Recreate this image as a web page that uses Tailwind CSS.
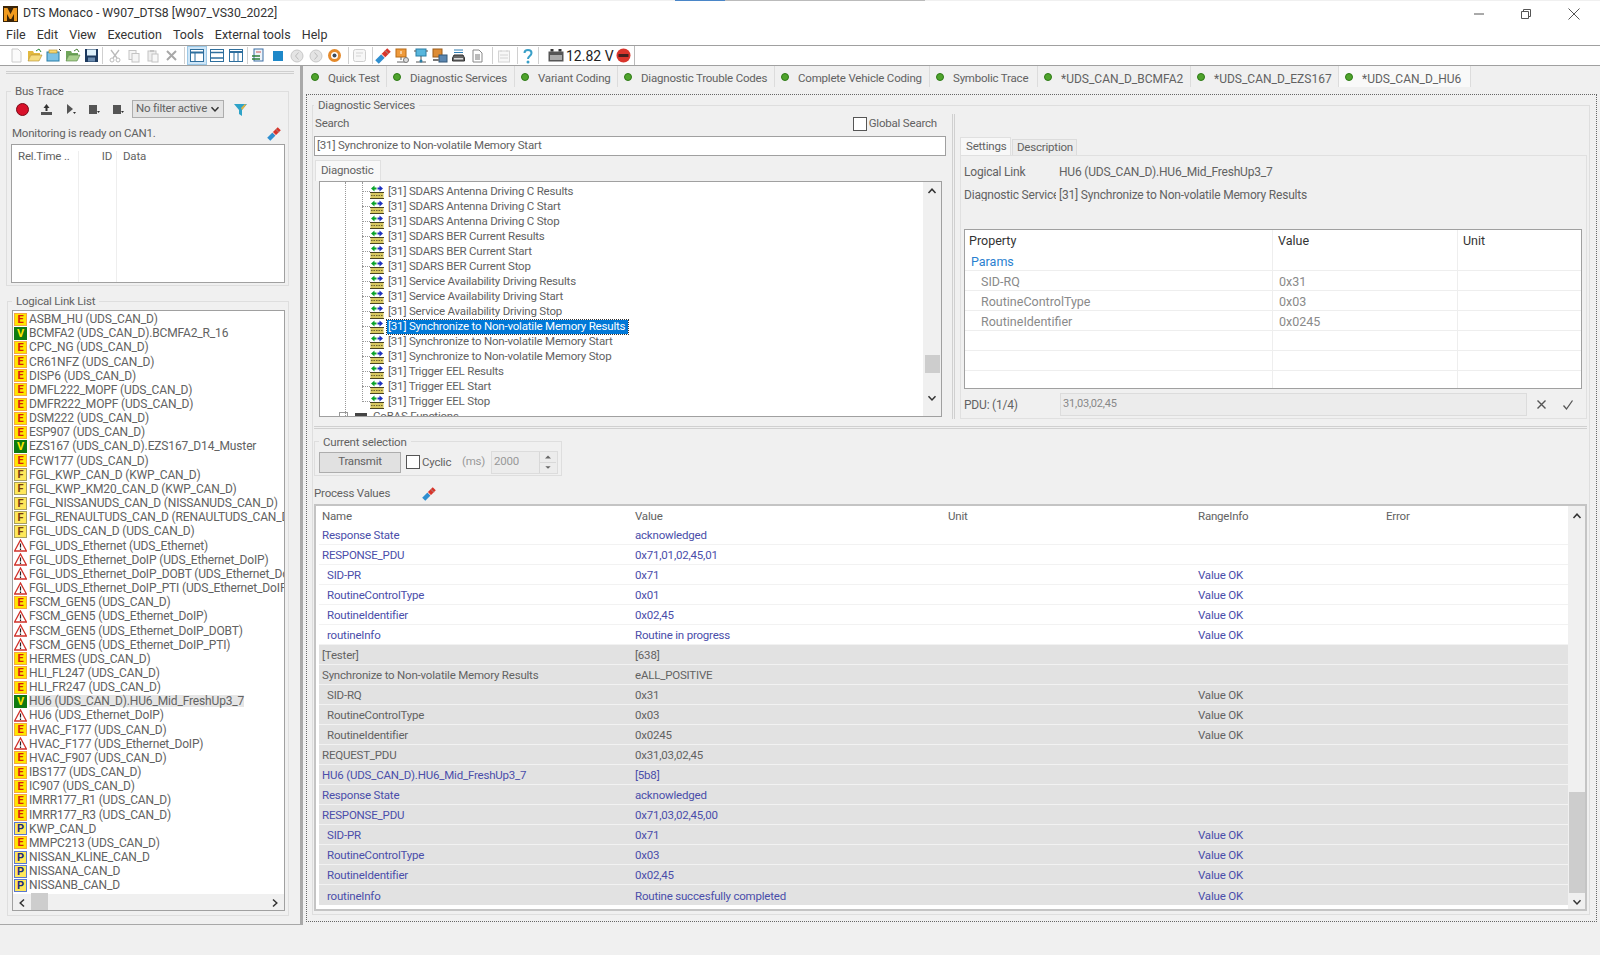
<!DOCTYPE html>
<html>
<head>
<meta charset="utf-8">
<title>DTS Monaco</title>
<script src="https://cdn.jsdelivr.net/npm/@tailwindcss/browser@4"></script>
</head>
<body class="bg-[#f0f0f0] text-[#626262] text-[11.500px] tracking-[-0.2px] leading-none whitespace-nowrap overflow-hidden font-['Roboto',sans-serif]">
<svg class="hidden">
  <symbol id="svc" viewBox="0 0 14 14"><path d="M1 3.500 4.500 .5v2h2v2h-2v2z" fill="#0aa32a"/><path d="M13 3.500 9.500 .5v2h-2v2h2v2z" fill="#1b2fc0"/><rect x="0.500" y="7.500" width="13" height="6" fill="#d8c860"/><path d="M0 7.500h14M0 13.500h14" stroke="#4a4320"/><path d="M1 10.500h12" stroke="#6b6230" stroke-dasharray="1.500 1"/></symbol>
  <symbol id="warn" viewBox="0 0 13 13"><path d="M6.500 1 12.400 12H.6z" fill="#fff" stroke="#d0322a" stroke-width="1.300"/><path d="M6.500 4.500v4M6.500 9.500v1.400" stroke="#222" stroke-width="1.200"/></symbol>
  <symbol id="up" viewBox="0 0 10 10"><path d="M1.500 7 5 3.200 8.500 7" fill="none" stroke="#333" stroke-width="1.500"/></symbol>
  <symbol id="down" viewBox="0 0 10 10"><path d="M1.500 3.200 5 7l3.500-3.800" fill="none" stroke="#333" stroke-width="1.500"/></symbol>
  <symbol id="plug" viewBox="0 0 16 16"><path d="M2 14 8 8" stroke="#2f8fd0" stroke-width="5"/><path d="M8 8l6-6" stroke="#d8352a" stroke-width="5"/><path d="M6 5.500l5 5" stroke="#fff"/><path d="M10 2.500l3.500 3.500" stroke="#999"/></symbol>
</svg>

<div class="h-[1px] relative"><div class="absolute left-[675px] top-0 w-[50px] h-[1px] bg-[#4a86c8]"></div><div class="absolute left-[725px] top-0 w-[200px] h-[1px] bg-[#bbb]"></div></div>
<header class="bg-white h-[25px] flex items-center justify-between tracking-normal">
  <div class="flex items-center">
    <svg class="ml-[3px] w-[15px] h-[16px]" viewBox="0 0 15 16"><rect width="15" height="16" fill="#3a2408"/><path d="M1 15V2h3.500l3 6 3-6H14v13h-3V8l-2.700 5H6.700L4 8v7z" fill="#f09a1e"/></svg>
    <span class="ml-[5px] text-[12.250px] text-[#333]">DTS Monaco - W907_DTS8 [W907_VS30_2022]</span>
  </div>
  <div class="flex items-center mr-[19px] gap-[35px]">
    <svg class="w-[12px] h-[12px]" viewBox="0 0 12 12"><path d="M1 6h10" stroke="#555"/></svg>
    <svg class="w-[12px] h-[12px]" viewBox="0 0 12 12"><path d="M1.500 3.500h7v7h-7zM3.500 3.500v-2h7v7h-2" fill="none" stroke="#555"/></svg>
    <svg class="w-[14px] h-[14px]" viewBox="0 0 14 14"><path d="M1.500 1.500l11 11M12.500 1.500l-11 11" stroke="#555"/></svg>
  </div>
</header>
<nav class="bg-white h-[19px] flex items-center pl-[6px] gap-[11.200px] text-[12.500px] tracking-normal text-[#333]">
  <span>File</span><span>Edit</span><span>View</span><span>Execution</span><span>Tools</span><span>External tools</span><span>Help</span>
</nav>
<div class="h-[21px] bg-white border-y border-[#a0a0a0] flex items-center pl-[6px]">
  <span class="w-[19px] flex justify-center"><svg class="w-[14px] h-[15px]" viewBox="0 0 14 15"><path d="M3 1h6l3 3v10H3z" fill="#fbfbfb" stroke="#ccc"/></svg></span>
  <span class="w-[19px] flex justify-center"><svg class="w-[16px] h-[15px]" viewBox="0 0 16 15"><path d="M1 3h5l1 2h6v2H4l-3 6z" fill="#e2b93f"/><path d="M4 7h11l-3 6H1z" fill="#f5dc80" stroke="#b18a25" stroke-width=".6"/><path d="M9 3l3-2 2 3" fill="none" stroke="#2d8a3a"/></svg></span>
  <span class="w-[19px] flex justify-center"><svg class="w-[16px] h-[15px]" viewBox="0 0 16 15"><rect x="1" y="4" width="12" height="9" fill="#7cc2e6" stroke="#2b7ea8"/><rect x="3" y="2" width="8" height="3" fill="#f6d774" stroke="#b18a25" stroke-width=".6"/><path d="M13 1l2 2" stroke="#333"/></svg></span>
  <span class="w-[19px] flex justify-center"><svg class="w-[16px] h-[15px]" viewBox="0 0 16 15"><path d="M1 3h5l1 2h6v2H4l-3 6z" fill="#6fa55a"/><path d="M4 7h11l-3 6H1z" fill="#a9d08e" stroke="#4f7f3c" stroke-width=".6"/><path d="M9 3l3-2 2 3" fill="none" stroke="#4f7f3c"/></svg></span>
  <span class="w-[19px] flex justify-center"><svg class="w-[15px] h-[15px]" viewBox="0 0 15 15"><rect x="1" y="1" width="13" height="13" fill="#1d3a5f"/><rect x="3" y="1.500" width="9" height="6" fill="#dff1fb"/><rect x="4" y="9.500" width="7" height="4" fill="#6d8db0"/></svg></span>
  <span class="ml-[1px] w-[1px] h-[17px] bg-[#d0d0d0]"></span>
  <span class="ml-[2px] w-[19px] flex justify-center"><svg class="w-[14px] h-[14px]" viewBox="0 0 14 14"><path d="M3 1l6 8M11 1 5 9" stroke="#bbb" stroke-width="1.300"/><circle cx="4" cy="11" r="2" fill="none" stroke="#bbb"/><circle cx="10" cy="11" r="2" fill="none" stroke="#bbb"/></svg></span>
  <span class="w-[19px] flex justify-center"><svg class="w-[14px] h-[14px]" viewBox="0 0 14 14"><rect x="2" y="1.500" width="7" height="9" fill="#f5f5f5" stroke="#c4c4c4"/><rect x="5" y="4.500" width="7" height="8.500" fill="#f5f5f5" stroke="#c4c4c4"/></svg></span>
  <span class="w-[19px] flex justify-center"><svg class="w-[14px] h-[14px]" viewBox="0 0 14 14"><rect x="2" y="2" width="8" height="10" fill="#eee" stroke="#c4c4c4"/><rect x="6" y="5" width="6" height="8" fill="#f8f8f8" stroke="#c4c4c4"/><rect x="4" y="1" width="4" height="2" fill="#c4c4c4"/></svg></span>
  <span class="w-[19px] flex justify-center"><svg class="w-[13px] h-[13px]" viewBox="0 0 13 13"><path d="M2 2l9 9M11 2l-9 9" stroke="#a8a8a8" stroke-width="2"/></svg></span>
  <span class="ml-[3px] w-[1px] h-[17px] bg-[#d0d0d0]"></span>
  <span class="ml-[2px] w-[20px] h-[19px] bg-[#cfe6f7] border border-[#9cc8e6] flex items-center justify-center"><svg class="w-[14px] h-[13px]" viewBox="0 0 14 13"><rect x=".5" y=".5" width="13" height="12" fill="#fff" stroke="#2e6f9e"/><path d="M.5 3.500h13" stroke="#2e6f9e" stroke-width="2"/><path d="M5 4v8" stroke="#2e6f9e"/></svg></span>
  <span class="w-[19px] flex justify-center"><svg class="w-[14px] h-[13px]" viewBox="0 0 14 13"><rect x=".5" y=".5" width="13" height="12" fill="#fff" stroke="#2e6f9e"/><path d="M.5 3.500h13M.5 9h13" stroke="#2e6f9e" stroke-width="1.500"/></svg></span>
  <span class="w-[19px] flex justify-center"><svg class="w-[14px] h-[13px]" viewBox="0 0 14 13"><rect x=".5" y=".5" width="13" height="12" fill="#fff" stroke="#2e6f9e"/><path d="M.5 3h13" stroke="#2e6f9e" stroke-width="2"/><path d="M5 3v9M9 3v9" stroke="#2e6f9e"/></svg></span>
  <span class="ml-[2px] w-[1px] h-[17px] bg-[#d0d0d0]"></span>
  <span class="ml-[1px] w-[19px] flex justify-center"><svg class="w-[15px] h-[15px]" viewBox="0 0 15 15"><rect x="3" y="1" width="9" height="12" fill="#eef4fa" stroke="#3a6ea5"/><path d="M1 8h8M1 11h8" stroke="#2f7f3a" stroke-width="1.500"/><path d="M5 4h5" stroke="#c55"/></svg></span>
  <span class="w-[19px] flex justify-center"><svg class="w-[10px] h-[10px]" viewBox="0 0 10 10"><rect width="10" height="10" fill="#1e88c9"/></svg></span>
  <span class="w-[19px] flex justify-center"><svg class="w-[14px] h-[14px]" viewBox="0 0 14 14"><circle cx="7" cy="7" r="6" fill="#e4e4e4" stroke="#c8c8c8"/><path d="M8.500 3.500 5.500 7l3 3.500" fill="none" stroke="#bbb"/></svg></span>
  <span class="w-[19px] flex justify-center"><svg class="w-[14px] h-[14px]" viewBox="0 0 14 14"><circle cx="7" cy="7" r="6" fill="#e4e4e4" stroke="#c8c8c8"/><path d="M5.500 3.500 8.500 7l-3 3.500" fill="none" stroke="#bbb"/></svg></span>
  <span class="w-[19px] flex justify-center"><svg class="w-[15px] h-[15px]" viewBox="0 0 15 15"><circle cx="7.500" cy="7.500" r="6.500" fill="#e58a2b"/><circle cx="7.500" cy="7.500" r="3.500" fill="#fff"/><circle cx="7.500" cy="7.500" r="2" fill="#3d4a5c"/></svg></span>
  <span class="ml-[4px] w-[1px] h-[17px] bg-[#d0d0d0]"></span>
  <span class="w-[20px] flex justify-center"><svg class="w-[15px] h-[15px]" viewBox="0 0 15 15"><rect x="1.500" y="1.500" width="12" height="12" rx="2" fill="#f7f7f7" stroke="#cfcfcf"/><path d="M4 5h7M4 8h5" stroke="#d5d5d5"/></svg></span>
  <span class="ml-[3px] w-[1px] h-[17px] bg-[#d0d0d0]"></span>
  <span class="w-[19px] flex justify-center"><svg class="w-[16px] h-[16px]"><use href="#plug"/></svg></span>
  <span class="w-[19px] flex justify-center"><svg class="w-[16px] h-[16px]" viewBox="0 0 16 16"><rect x="2" y="1" width="10" height="8" fill="#ee9a3c" stroke="#b96a15"/><path d="M7 3v3" stroke="#fff"/><path d="M7 9v3M3 14h8" stroke="#666"/><circle cx="12" cy="12" r="2.500" fill="#ddd" stroke="#777"/></svg></span>
  <span class="w-[19px] flex justify-center"><svg class="w-[16px] h-[16px]" viewBox="0 0 16 16"><rect x="3" y="1" width="10" height="7" fill="#58b6dc" stroke="#2a7ea5"/><path d="M1 3h2M13 3h2M8 8v4M3 14h10" stroke="#555"/><circle cx="8" cy="13" r="1.500" fill="#2a7ea5"/></svg></span>
  <span class="w-[19px] flex justify-center"><svg class="w-[16px] h-[16px]" viewBox="0 0 16 16"><rect x="1" y="1" width="9" height="8" fill="#dd8c34" stroke="#9d5d18"/><rect x="7" y="7" width="8" height="7" fill="#5a86b0" stroke="#345878"/><path d="M1 12h6" stroke="#777" stroke-width="2"/></svg></span>
  <span class="w-[19px] flex justify-center"><svg class="w-[15px] h-[15px]" viewBox="0 0 15 15"><path d="M3 2h9M3 4.500h9" stroke="#2f7fb5"/><path d="M3 7h9l1.500 3v3h-12v-3z" fill="#666" stroke="#333"/><rect x="3" y="10" width="9" height="1.500" fill="#ddd"/></svg></span>
  <span class="w-[19px] flex justify-center"><svg class="w-[13px] h-[14px]" viewBox="0 0 13 14"><path d="M2 1h6l3 3v9H2z" fill="#fff" stroke="#888"/><path d="M4 6h5M4 8h5M4 10h5" stroke="#777"/></svg></span>
  <span class="ml-[5px] w-[1px] h-[17px] bg-[#d0d0d0]"></span>
  <span class="ml-[1px] w-[19px] flex justify-center"><svg class="w-[14px] h-[14px]" viewBox="0 0 14 14"><rect x="1.500" y="2" width="11" height="11" fill="#f7f7f7" stroke="#d4d4d4"/><path d="M4 1v2M10 1v2M3 6h8M3 9h8" stroke="#d4d4d4"/></svg></span>
  <span class="ml-[4px] w-[1px] h-[17px] bg-[#d0d0d0]"></span>
  <span class="w-[19px] flex justify-center"><svg class="w-[10px] h-[16px]" viewBox="0 0 10 16"><path d="M1.500 5C1.500 1 8.500 1 8.500 5c0 3-3.500 3-3.500 6" fill="none" stroke="#3aa0c8" stroke-width="2"/><circle cx="5" cy="14" r="1.500" fill="#3aa0c8"/></svg></span>
  <span class="ml-[1px] w-[1px] h-[17px] bg-[#d0d0d0]"></span>
  <svg class="ml-[9px] w-[16px] h-[13px]" viewBox="0 0 16 13"><rect x=".5" y="2.500" width="15" height="10" fill="#555"/><rect x="2" y="6" width="12" height="5" fill="#aaa"/><rect x="2.500" y="0" width="3" height="2.500" fill="#333"/><rect x="10.500" y="0" width="3" height="2.500" fill="#333"/></svg>
  <span class="ml-[2px] w-[50px] text-[14px] tracking-normal text-[#222]">12.82 V</span>
  <svg class="w-[15px] h-[15px]" viewBox="0 0 15 15"><circle cx="7.500" cy="7.500" r="7" fill="#d9352c"/><rect x="2.500" y="6" width="10" height="3" fill="#40201e"/></svg>
  <span class="ml-[3px] w-[1px] h-[19px] bg-[#bbb]"></span>
</div>

<div class="flex h-[859px]">
  <aside class="w-[303px] shrink-0 border-r-[3px] border-b border-[#a8a8a8] pl-[6px]">
    <div class="h-[3px] w-[288px] mt-[5px] border-y border-[#cfcfcf]"></div>
    <section class="relative mt-[17px] w-[283px] h-[195px] border border-[#dedede] pl-[4px]">
      <span class="absolute left-[4px] -top-[6px] bg-[#f0f0f0] px-[4px]">Bus Trace</span>
      <div class="flex items-center h-[20px] mt-[7px] pl-[5px]">
        <svg class="w-[13px] h-[13px] mr-[11px]" viewBox="0 0 13 13"><circle cx="6.500" cy="6.500" r="6" fill="#d8112a" stroke="#7a0a18"/></svg>
        <svg class="w-[13px] h-[13px] mr-[11px]" viewBox="0 0 13 13"><path d="M6.500 1 3.500 5h2v3h2V5h2z" fill="#333"/><rect x="1" y="9" width="11" height="3" fill="#555"/></svg>
        <svg class="w-[13px] h-[13px] mr-[11px]" viewBox="0 0 13 13"><path d="M3 1v10l6-5z" fill="#555"/><path d="M9 9h3l-1.500 2z" fill="#333"/></svg>
        <svg class="w-[13px] h-[13px] mr-[11px]" viewBox="0 0 13 13"><rect x="1" y="2" width="8" height="9" fill="#555"/><path d="M9 8h3l-1.500 2z" fill="#333"/></svg>
        <svg class="w-[13px] h-[13px] mr-[7px]" viewBox="0 0 13 13"><rect x="1" y="2" width="8" height="9" fill="#555"/><path d="M9 8h3l-1.500 2z" fill="#333"/></svg>
        <div class="w-[92px] h-[18px] bg-[#e4e4e4] border border-[#adadad] flex items-center justify-between px-[3px]">No filter active <svg class="w-[10px] h-[10px]"><use href="#down"/></svg></div>
        <svg class="ml-[9px] w-[15px] h-[15px]" viewBox="0 0 15 15"><path d="M1 2h13L9 8v6L6 12V8z" fill="#2ea3c8"/><path d="M8 6l4-4 1 1-4 5z" fill="#e9b23a"/></svg>
      </div>
      <div class="flex justify-between items-center h-[14px] mt-[8px] pl-[1px] pr-[7px]">
        <span>Monitoring is ready on CAN1.</span><svg class="w-[14px] h-[14px]"><use href="#plug"/></svg>
      </div>
      <div class="w-[274px] h-[139px] mt-[3px] bg-white border border-[#a0a0a0] pt-[6px] flex">
        <span class="w-[66px] pl-[6px]">Rel.Time ..</span><span class="w-[34px] text-right border-l border-[#eee]">ID</span><span class="pl-[6px] ml-[4px] border-l border-[#eee]">Data</span>
      </div>
    </section>
    <section class="relative mt-[15px] ml-[1px] w-[282px] h-[615px] border border-[#dedede] pl-[4px] pt-[8px]">
      <span class="absolute left-[4px] -top-[6px] bg-[#f0f0f0] px-[4px]">Logical Link List</span>
      <div class="w-[273px] h-[601px] bg-white border border-[#a0a0a0] overflow-hidden text-[12px] tracking-[-0.150px]">
        <div class="h-[583px] pt-[1px] overflow-hidden">
          <div class="h-[14.170px] flex items-center"><span class="w-[13px] h-[13px] ml-[1px] mr-[2px] shrink-0 bg-[#ffe600] border border-[#f5a742] text-[#d8200c] font-bold text-[11px] flex items-center justify-center">E</span>ASBM_HU (UDS_CAN_D)</div>
          <div class="h-[14.170px] flex items-center"><span class="w-[13px] h-[13px] ml-[1px] mr-[2px] shrink-0 bg-[#0f7a12] text-[#ffe600] font-bold text-[11px] flex items-center justify-center">V</span>BCMFA2 (UDS_CAN_D).BCMFA2_R_16</div>
          <div class="h-[14.170px] flex items-center"><span class="w-[13px] h-[13px] ml-[1px] mr-[2px] shrink-0 bg-[#ffe600] border border-[#f5a742] text-[#d8200c] font-bold text-[11px] flex items-center justify-center">E</span>CPC_NG (UDS_CAN_D)</div>
          <div class="h-[14.170px] flex items-center"><span class="w-[13px] h-[13px] ml-[1px] mr-[2px] shrink-0 bg-[#ffe600] border border-[#f5a742] text-[#d8200c] font-bold text-[11px] flex items-center justify-center">E</span>CR61NFZ (UDS_CAN_D)</div>
          <div class="h-[14.170px] flex items-center"><span class="w-[13px] h-[13px] ml-[1px] mr-[2px] shrink-0 bg-[#ffe600] border border-[#f5a742] text-[#d8200c] font-bold text-[11px] flex items-center justify-center">E</span>DISP6 (UDS_CAN_D)</div>
          <div class="h-[14.170px] flex items-center"><span class="w-[13px] h-[13px] ml-[1px] mr-[2px] shrink-0 bg-[#ffe600] border border-[#f5a742] text-[#d8200c] font-bold text-[11px] flex items-center justify-center">E</span>DMFL222_MOPF (UDS_CAN_D)</div>
          <div class="h-[14.170px] flex items-center"><span class="w-[13px] h-[13px] ml-[1px] mr-[2px] shrink-0 bg-[#ffe600] border border-[#f5a742] text-[#d8200c] font-bold text-[11px] flex items-center justify-center">E</span>DMFR222_MOPF (UDS_CAN_D)</div>
          <div class="h-[14.170px] flex items-center"><span class="w-[13px] h-[13px] ml-[1px] mr-[2px] shrink-0 bg-[#ffe600] border border-[#f5a742] text-[#d8200c] font-bold text-[11px] flex items-center justify-center">E</span>DSM222 (UDS_CAN_D)</div>
          <div class="h-[14.170px] flex items-center"><span class="w-[13px] h-[13px] ml-[1px] mr-[2px] shrink-0 bg-[#ffe600] border border-[#f5a742] text-[#d8200c] font-bold text-[11px] flex items-center justify-center">E</span>ESP907 (UDS_CAN_D)</div>
          <div class="h-[14.170px] flex items-center"><span class="w-[13px] h-[13px] ml-[1px] mr-[2px] shrink-0 bg-[#0f7a12] text-[#ffe600] font-bold text-[11px] flex items-center justify-center">V</span>EZS167 (UDS_CAN_D).EZS167_D14_Muster</div>
          <div class="h-[14.170px] flex items-center"><span class="w-[13px] h-[13px] ml-[1px] mr-[2px] shrink-0 bg-[#ffe600] border border-[#f5a742] text-[#d8200c] font-bold text-[11px] flex items-center justify-center">E</span>FCW177 (UDS_CAN_D)</div>
          <div class="h-[14.170px] flex items-center"><span class="w-[13px] h-[13px] ml-[1px] mr-[2px] shrink-0 bg-[#ffe85a] border border-[#a8a060] text-[#7a3c10] font-bold text-[11px] flex items-center justify-center">F</span>FGL_KWP_CAN_D (KWP_CAN_D)</div>
          <div class="h-[14.170px] flex items-center"><span class="w-[13px] h-[13px] ml-[1px] mr-[2px] shrink-0 bg-[#ffe85a] border border-[#a8a060] text-[#7a3c10] font-bold text-[11px] flex items-center justify-center">F</span>FGL_KWP_KM20_CAN_D (KWP_CAN_D)</div>
          <div class="h-[14.170px] flex items-center"><span class="w-[13px] h-[13px] ml-[1px] mr-[2px] shrink-0 bg-[#ffe85a] border border-[#a8a060] text-[#7a3c10] font-bold text-[11px] flex items-center justify-center">F</span>FGL_NISSANUDS_CAN_D (NISSANUDS_CAN_D)</div>
          <div class="h-[14.170px] flex items-center"><span class="w-[13px] h-[13px] ml-[1px] mr-[2px] shrink-0 bg-[#ffe85a] border border-[#a8a060] text-[#7a3c10] font-bold text-[11px] flex items-center justify-center">F</span>FGL_RENAULTUDS_CAN_D (RENAULTUDS_CAN_D)</div>
          <div class="h-[14.170px] flex items-center"><span class="w-[13px] h-[13px] ml-[1px] mr-[2px] shrink-0 bg-[#ffe85a] border border-[#a8a060] text-[#7a3c10] font-bold text-[11px] flex items-center justify-center">F</span>FGL_UDS_CAN_D (UDS_CAN_D)</div>
          <div class="h-[14.170px] flex items-center"><svg class="w-[13px] h-[13px] ml-[1px] mr-[2px] shrink-0"><use href="#warn"/></svg>FGL_UDS_Ethernet (UDS_Ethernet)</div>
          <div class="h-[14.170px] flex items-center"><svg class="w-[13px] h-[13px] ml-[1px] mr-[2px] shrink-0"><use href="#warn"/></svg>FGL_UDS_Ethernet_DoIP (UDS_Ethernet_DoIP)</div>
          <div class="h-[14.170px] flex items-center"><svg class="w-[13px] h-[13px] ml-[1px] mr-[2px] shrink-0"><use href="#warn"/></svg>FGL_UDS_Ethernet_DoIP_DOBT (UDS_Ethernet_DoIP_DOBT)</div>
          <div class="h-[14.170px] flex items-center"><svg class="w-[13px] h-[13px] ml-[1px] mr-[2px] shrink-0"><use href="#warn"/></svg>FGL_UDS_Ethernet_DoIP_PTI (UDS_Ethernet_DoIP_PTI)</div>
          <div class="h-[14.170px] flex items-center"><span class="w-[13px] h-[13px] ml-[1px] mr-[2px] shrink-0 bg-[#ffe600] border border-[#f5a742] text-[#d8200c] font-bold text-[11px] flex items-center justify-center">E</span>FSCM_GEN5 (UDS_CAN_D)</div>
          <div class="h-[14.170px] flex items-center"><svg class="w-[13px] h-[13px] ml-[1px] mr-[2px] shrink-0"><use href="#warn"/></svg>FSCM_GEN5 (UDS_Ethernet_DoIP)</div>
          <div class="h-[14.170px] flex items-center"><svg class="w-[13px] h-[13px] ml-[1px] mr-[2px] shrink-0"><use href="#warn"/></svg>FSCM_GEN5 (UDS_Ethernet_DoIP_DOBT)</div>
          <div class="h-[14.170px] flex items-center"><svg class="w-[13px] h-[13px] ml-[1px] mr-[2px] shrink-0"><use href="#warn"/></svg>FSCM_GEN5 (UDS_Ethernet_DoIP_PTI)</div>
          <div class="h-[14.170px] flex items-center"><span class="w-[13px] h-[13px] ml-[1px] mr-[2px] shrink-0 bg-[#ffe600] border border-[#f5a742] text-[#d8200c] font-bold text-[11px] flex items-center justify-center">E</span>HERMES (UDS_CAN_D)</div>
          <div class="h-[14.170px] flex items-center"><span class="w-[13px] h-[13px] ml-[1px] mr-[2px] shrink-0 bg-[#ffe600] border border-[#f5a742] text-[#d8200c] font-bold text-[11px] flex items-center justify-center">E</span>HLI_FL247 (UDS_CAN_D)</div>
          <div class="h-[14.170px] flex items-center"><span class="w-[13px] h-[13px] ml-[1px] mr-[2px] shrink-0 bg-[#ffe600] border border-[#f5a742] text-[#d8200c] font-bold text-[11px] flex items-center justify-center">E</span>HLI_FR247 (UDS_CAN_D)</div>
          <div class="h-[14.170px] flex items-center"><span class="w-[13px] h-[13px] ml-[1px] mr-[2px] shrink-0 bg-[#0f7a12] text-[#ffe600] font-bold text-[11px] flex items-center justify-center">V</span><span class="bg-[#e6e6e6]">HU6 (UDS_CAN_D).HU6_Mid_FreshUp3_7</span></div>
          <div class="h-[14.170px] flex items-center"><svg class="w-[13px] h-[13px] ml-[1px] mr-[2px] shrink-0"><use href="#warn"/></svg>HU6 (UDS_Ethernet_DoIP)</div>
          <div class="h-[14.170px] flex items-center"><span class="w-[13px] h-[13px] ml-[1px] mr-[2px] shrink-0 bg-[#ffe600] border border-[#f5a742] text-[#d8200c] font-bold text-[11px] flex items-center justify-center">E</span>HVAC_F177 (UDS_CAN_D)</div>
          <div class="h-[14.170px] flex items-center"><svg class="w-[13px] h-[13px] ml-[1px] mr-[2px] shrink-0"><use href="#warn"/></svg>HVAC_F177 (UDS_Ethernet_DoIP)</div>
          <div class="h-[14.170px] flex items-center"><span class="w-[13px] h-[13px] ml-[1px] mr-[2px] shrink-0 bg-[#ffe600] border border-[#f5a742] text-[#d8200c] font-bold text-[11px] flex items-center justify-center">E</span>HVAC_F907 (UDS_CAN_D)</div>
          <div class="h-[14.170px] flex items-center"><span class="w-[13px] h-[13px] ml-[1px] mr-[2px] shrink-0 bg-[#ffe600] border border-[#f5a742] text-[#d8200c] font-bold text-[11px] flex items-center justify-center">E</span>IBS177 (UDS_CAN_D)</div>
          <div class="h-[14.170px] flex items-center"><span class="w-[13px] h-[13px] ml-[1px] mr-[2px] shrink-0 bg-[#ffe600] border border-[#f5a742] text-[#d8200c] font-bold text-[11px] flex items-center justify-center">E</span>IC907 (UDS_CAN_D)</div>
          <div class="h-[14.170px] flex items-center"><span class="w-[13px] h-[13px] ml-[1px] mr-[2px] shrink-0 bg-[#ffe600] border border-[#f5a742] text-[#d8200c] font-bold text-[11px] flex items-center justify-center">E</span>IMRR177_R1 (UDS_CAN_D)</div>
          <div class="h-[14.170px] flex items-center"><span class="w-[13px] h-[13px] ml-[1px] mr-[2px] shrink-0 bg-[#ffe600] border border-[#f5a742] text-[#d8200c] font-bold text-[11px] flex items-center justify-center">E</span>IMRR177_R3 (UDS_CAN_D)</div>
          <div class="h-[14.170px] flex items-center"><span class="w-[13px] h-[13px] ml-[1px] mr-[2px] shrink-0 bg-[#ffe85a] border border-[#5a78d0] text-[#1d2a80] font-bold text-[11px] flex items-center justify-center">P</span>KWP_CAN_D</div>
          <div class="h-[14.170px] flex items-center"><span class="w-[13px] h-[13px] ml-[1px] mr-[2px] shrink-0 bg-[#ffe600] border border-[#f5a742] text-[#d8200c] font-bold text-[11px] flex items-center justify-center">E</span>MMPC213 (UDS_CAN_D)</div>
          <div class="h-[14.170px] flex items-center"><span class="w-[13px] h-[13px] ml-[1px] mr-[2px] shrink-0 bg-[#ffe85a] border border-[#5a78d0] text-[#1d2a80] font-bold text-[11px] flex items-center justify-center">P</span>NISSAN_KLINE_CAN_D</div>
          <div class="h-[14.170px] flex items-center"><span class="w-[13px] h-[13px] ml-[1px] mr-[2px] shrink-0 bg-[#ffe85a] border border-[#5a78d0] text-[#1d2a80] font-bold text-[11px] flex items-center justify-center">P</span>NISSANA_CAN_D</div>
          <div class="h-[14.170px] flex items-center"><span class="w-[13px] h-[13px] ml-[1px] mr-[2px] shrink-0 bg-[#ffe85a] border border-[#5a78d0] text-[#1d2a80] font-bold text-[11px] flex items-center justify-center">P</span>NISSANB_CAN_D</div>
        </div>
        <div class="h-[17px] bg-[#f0f0f0] flex items-center justify-between px-[4px]">
          <svg class="w-[10px] h-[10px] -rotate-90"><use href="#up"/></svg>
          <span class="absolute left-[23px] bottom-[5px] w-[17px] h-[17px] bg-[#cdcdcd]"></span>
          <svg class="w-[10px] h-[10px] rotate-90"><use href="#up"/></svg>
        </div>
      </div>
    </section>
  </aside>

  <main class="w-[1297px]">
    <div class="flex h-[21px] ml-[2px]">
      <div class="w-[82px] flex items-center border-r border-[#dcdcdc] pl-[6px]"><span class="w-[8px] h-[8px] rounded-full bg-[#4fa32c] border border-[#2d7a16] mr-[9px]"></span><span class="pt-[5px]">Quick Test</span></div>
      <div class="w-[128px] flex items-center border-r border-[#dcdcdc] pl-[6px]"><span class="w-[8px] h-[8px] rounded-full bg-[#4fa32c] border border-[#2d7a16] mr-[9px]"></span><span class="pt-[5px]">Diagnostic Services</span></div>
      <div class="w-[103px] flex items-center border-r border-[#dcdcdc] pl-[6px]"><span class="w-[8px] h-[8px] rounded-full bg-[#4fa32c] border border-[#2d7a16] mr-[9px]"></span><span class="pt-[5px]">Variant Coding</span></div>
      <div class="w-[157px] flex items-center border-r border-[#dcdcdc] pl-[6px]"><span class="w-[8px] h-[8px] rounded-full bg-[#4fa32c] border border-[#2d7a16] mr-[9px]"></span><span class="pt-[5px]">Diagnostic Trouble Codes</span></div>
      <div class="w-[155px] flex items-center border-r border-[#dcdcdc] pl-[6px]"><span class="w-[8px] h-[8px] rounded-full bg-[#4fa32c] border border-[#2d7a16] mr-[9px]"></span><span class="pt-[5px]">Complete Vehicle Coding</span></div>
      <div class="w-[108px] flex items-center border-r border-[#dcdcdc] pl-[6px]"><span class="w-[8px] h-[8px] rounded-full bg-[#4fa32c] border border-[#2d7a16] mr-[9px]"></span><span class="pt-[5px]">Symbolic Trace</span></div>
      <div class="w-[153px] flex items-center border-r border-[#dcdcdc] pl-[6px]"><span class="w-[8px] h-[8px] rounded-full bg-[#4fa32c] border border-[#2d7a16] mr-[9px]"></span><span class="pt-[5px] text-[12px] tracking-normal">*UDS_CAN_D_BCMFA2</span></div>
      <div class="w-[148px] flex items-center border-r border-[#dcdcdc] pl-[6px]"><span class="w-[8px] h-[8px] rounded-full bg-[#4fa32c] border border-[#2d7a16] mr-[9px]"></span><span class="pt-[5px] text-[12px] tracking-normal">*UDS_CAN_D_EZS167</span></div>
      <div class="w-[132px] flex items-center bg-[#f9f9f9] border-r border-[#dcdcdc] pl-[6px]"><span class="w-[8px] h-[8px] rounded-full bg-[#4fa32c] border border-[#2d7a16] mr-[9px]"></span><span class="pt-[5px] text-[12px] tracking-normal">*UDS_CAN_D_HU6</span></div>
    </div>

    <div class="mt-[7px] ml-[3px] w-[1291px] h-[828px] border border-dotted border-[#666] pl-[5px] pt-[10px]">
      <section class="relative w-[1278px] h-[810px] border border-[#dedede] pl-[1px]">
        <span class="absolute left-[1px] -top-[6px] bg-[#f0f0f0] px-[4px]">Diagnostic Services</span>
        <div class="flex h-[318px]">
          <div class="w-[634px]">
            <div class="h-[30px] flex justify-between items-center pt-[5px] pl-[1px] pr-[11px]">
              <span>Search</span>
              <span class="flex items-center"><span class="w-[14px] h-[14px] bg-white border border-[#555] mr-[2px]"></span>Global Search</span>
            </div>
            <div class="w-[632px] h-[20px] bg-white border border-[#a0a0a0] flex items-center pl-[2px]">[31] Synchronize to Non-volatile Memory Start</div>
            <div class="w-[66px] h-[21px] mt-[4px] ml-[1px] bg-[#f8f8f8] border-x border-t border-[#e0e0e0] flex items-center pl-[5px]">Diagnostic</div>
            <div class="relative ml-[5px] w-[623px] h-[236px] bg-white border border-[#a0a0a0] overflow-hidden flex">
              <span class="absolute left-[25px] top-0 h-[236px] border-l border-dotted border-[#999]"></span>
              <span class="absolute left-[42px] top-0 h-[218px] border-l border-dotted border-[#999]"></span>
              <div class="flex-1 pt-[2px]">
                <div class="h-[15px] flex items-center pl-[42px]"><span class="w-[8px] border-t border-dotted border-[#999]"></span><svg class="w-[14px] h-[14px] mr-[4px]"><use href="#svc"/></svg>[31] SDARS Antenna Driving C Results</div>
                <div class="h-[15px] flex items-center pl-[42px]"><span class="w-[8px] border-t border-dotted border-[#999]"></span><svg class="w-[14px] h-[14px] mr-[4px]"><use href="#svc"/></svg>[31] SDARS Antenna Driving C Start</div>
                <div class="h-[15px] flex items-center pl-[42px]"><span class="w-[8px] border-t border-dotted border-[#999]"></span><svg class="w-[14px] h-[14px] mr-[4px]"><use href="#svc"/></svg>[31] SDARS Antenna Driving C Stop</div>
                <div class="h-[15px] flex items-center pl-[42px]"><span class="w-[8px] border-t border-dotted border-[#999]"></span><svg class="w-[14px] h-[14px] mr-[4px]"><use href="#svc"/></svg>[31] SDARS BER Current Results</div>
                <div class="h-[15px] flex items-center pl-[42px]"><span class="w-[8px] border-t border-dotted border-[#999]"></span><svg class="w-[14px] h-[14px] mr-[4px]"><use href="#svc"/></svg>[31] SDARS BER Current Start</div>
                <div class="h-[15px] flex items-center pl-[42px]"><span class="w-[8px] border-t border-dotted border-[#999]"></span><svg class="w-[14px] h-[14px] mr-[4px]"><use href="#svc"/></svg>[31] SDARS BER Current Stop</div>
                <div class="h-[15px] flex items-center pl-[42px]"><span class="w-[8px] border-t border-dotted border-[#999]"></span><svg class="w-[14px] h-[14px] mr-[4px]"><use href="#svc"/></svg>[31] Service Availability Driving Results</div>
                <div class="h-[15px] flex items-center pl-[42px]"><span class="w-[8px] border-t border-dotted border-[#999]"></span><svg class="w-[14px] h-[14px] mr-[4px]"><use href="#svc"/></svg>[31] Service Availability Driving Start</div>
                <div class="h-[15px] flex items-center pl-[42px]"><span class="w-[8px] border-t border-dotted border-[#999]"></span><svg class="w-[14px] h-[14px] mr-[4px]"><use href="#svc"/></svg>[31] Service Availability Driving Stop</div>
                <div class="h-[15px] flex items-center pl-[42px]"><span class="w-[8px] border-t border-dotted border-[#999]"></span><svg class="w-[14px] h-[14px] mr-[3px]"><use href="#svc"/></svg><span class="w-[241px] h-[14px] flex items-center pl-[1px] bg-[#0078d7] text-white outline-1 outline-dotted outline-[#333]">[31] Synchronize to Non-volatile Memory Results</span></div>
                <div class="h-[15px] flex items-center pl-[42px]"><span class="w-[8px] border-t border-dotted border-[#999]"></span><svg class="w-[14px] h-[14px] mr-[4px]"><use href="#svc"/></svg>[31] Synchronize to Non-volatile Memory Start</div>
                <div class="h-[15px] flex items-center pl-[42px]"><span class="w-[8px] border-t border-dotted border-[#999]"></span><svg class="w-[14px] h-[14px] mr-[4px]"><use href="#svc"/></svg>[31] Synchronize to Non-volatile Memory Stop</div>
                <div class="h-[15px] flex items-center pl-[42px]"><span class="w-[8px] border-t border-dotted border-[#999]"></span><svg class="w-[14px] h-[14px] mr-[4px]"><use href="#svc"/></svg>[31] Trigger EEL Results</div>
                <div class="h-[15px] flex items-center pl-[42px]"><span class="w-[8px] border-t border-dotted border-[#999]"></span><svg class="w-[14px] h-[14px] mr-[4px]"><use href="#svc"/></svg>[31] Trigger EEL Start</div>
                <div class="h-[15px] flex items-center pl-[42px]"><span class="w-[8px] border-t border-dotted border-[#999]"></span><svg class="w-[14px] h-[14px] mr-[4px]"><use href="#svc"/></svg>[31] Trigger EEL Stop</div>
                <div class="h-[15px] flex items-center pl-[19px]"><span class="w-[9px] h-[9px] bg-white border border-[#999] mr-[6px]"></span><svg class="w-[14px] h-[11px] mr-[5px]" viewBox="0 0 14 11"><rect x="1" y="2" width="12" height="7" fill="#444"/></svg>CoBAS Functions</div>
              </div>
              <div class="w-[18px] bg-[#f0f0f0] ml-[1px] flex flex-col items-center">
                <svg class="w-[10px] h-[10px] mt-[4px]"><use href="#up"/></svg>
                <span class="w-[15px] h-[18px] bg-[#cdcdcd] mt-[159px]"></span>
                <svg class="w-[10px] h-[10px] mt-[20px]"><use href="#down"/></svg>
              </div>
            </div>
          </div>
          <div class="ml-[4px] mt-[8px] w-[3px] h-[305px] border-x border-[#d0d0d0]"></div>
          <div class="ml-[5px] mt-[31px] w-[627px]">
            <div class="flex h-[18px] items-end">
              <div class="w-[51px] h-[18px] bg-[#f8f8f8] border-x border-t border-[#e0e0e0] flex items-center pl-[5px]">Settings</div>
              <div class="w-[65px] h-[16px] ml-[1px] bg-[#ececec] border-x border-t border-[#dcdcdc] flex items-center pl-[4px]">Description</div>
            </div>
            <div class="h-[264px] border border-[#e0e0e0] text-[12px]">
              <div class="h-[20px] mt-[6px] flex items-center pl-[3px]"><span class="w-[95px]">Logical Link</span><span>HU6 (UDS_CAN_D).HU6_Mid_FreshUp3_7</span></div>
              <div class="h-[20px] mt-[3px] flex items-center pl-[3px]"><span class="w-[92px] overflow-hidden mr-[3px]">Diagnostic Service</span><span>[31] Synchronize to Non-volatile Memory Results</span></div>
              <div class="ml-[3px] mt-[24px] w-[618px] h-[160px] bg-white border border-[#a0a0a0] overflow-hidden text-[12.500px] tracking-normal">
                <div class="grid grid-cols-[307px_185px_1fr] h-[21px] items-center text-[#333]"><span class="pl-[4px] pt-[2px]">Property</span><span class="pl-[5px] pt-[2px] h-[21px] flex items-center border-l border-[#eee]">Value</span><span class="pl-[5px] pt-[2px] h-[21px] flex items-center border-l border-[#eee]">Unit</span></div>
                <div class="grid grid-cols-[307px_185px_1fr] h-[20px] items-center border-b border-[#eee]"><span class="pl-[6px] pt-[2px] text-[#2a7fd0]">Params</span><span class="h-[20px] border-l border-[#eee]"></span><span class="h-[20px] border-l border-[#eee]"></span></div>
                <div class="grid grid-cols-[307px_185px_1fr] h-[20px] items-center border-b border-[#eee] text-[#8a8a8a]"><span class="pl-[16px] pt-[2px]">SID-RQ</span><span class="pl-[6px] pt-[2px] h-[20px] flex items-center border-l border-[#eee]">0x31</span><span class="h-[20px] border-l border-[#eee]"></span></div>
                <div class="grid grid-cols-[307px_185px_1fr] h-[20px] items-center border-b border-[#eee] text-[#8a8a8a]"><span class="pl-[16px] pt-[2px]">RoutineControlType</span><span class="pl-[6px] pt-[2px] h-[20px] flex items-center border-l border-[#eee]">0x03</span><span class="h-[20px] border-l border-[#eee]"></span></div>
                <div class="grid grid-cols-[307px_185px_1fr] h-[20px] items-center border-b border-[#eee] text-[#8a8a8a]"><span class="pl-[16px] pt-[2px]">RoutineIdentifier</span><span class="pl-[6px] pt-[2px] h-[20px] flex items-center border-l border-[#eee]">0x0245</span><span class="h-[20px] border-l border-[#eee]"></span></div>
                <div class="grid grid-cols-[307px_185px_1fr] h-[20px] border-b border-[#eee]"><span></span><span class="border-l border-[#eee]"></span><span class="border-l border-[#eee]"></span></div>
                <div class="grid grid-cols-[307px_185px_1fr] h-[20px] border-b border-[#eee]"><span></span><span class="border-l border-[#eee]"></span><span class="border-l border-[#eee]"></span></div>
                <div class="grid grid-cols-[307px_185px_1fr] h-[20px]"><span></span><span class="border-l border-[#eee]"></span><span class="border-l border-[#eee]"></span></div>
              </div>
              <div class="h-[23px] mt-[4px] flex items-center pl-[3px]">
                <span class="w-[96px]">PDU: (1/4)</span>
                <div class="w-[467px] h-[23px] bg-[#ececec] border border-[#dcdcdc] pl-[2px] pt-[4px] text-[11px] text-[#888]">31,03,02,45</div>
                <svg class="ml-[9px] w-[11px] h-[11px]" viewBox="0 0 11 11"><path d="M1.500 1.500l8 8M9.500 1.500l-8 8" stroke="#555" stroke-width="1.400"/></svg>
                <svg class="ml-[15px] w-[12px] h-[12px]" viewBox="0 0 12 12"><path d="M1.500 6.500 4.500 10 10.500 1.500" fill="none" stroke="#555" stroke-width="1.300"/></svg>
              </div>
            </div>
          </div>
        </div>
        <div class="mt-[2px] w-[1273px] h-[3px] border-y border-[#d0d0d0]"></div>
        <div class="relative mt-[12px] w-[248px] h-[35px] border border-[#dedede] flex items-center pl-[4px]">
          <span class="absolute left-[4px] -top-[5px] bg-[#f0f0f0] px-[4px]">Current selection</span>
          <div class="w-[82px] h-[21px] mt-[7px] bg-[#e1e1e1] border border-[#adadad] flex items-center justify-center">Transmit</div>
          <span class="ml-[5px] mt-[7px] w-[14px] h-[14px] bg-white border border-[#555]"></span>
          <span class="ml-[2px] mt-[8px] w-[30px]">Cyclic</span>
          <span class="ml-[10px] mt-[7px] w-[29px] text-[#999]">(ms)</span>
          <div class="mt-[7px] w-[67px] h-[23px] bg-[#ececec] border border-[#dcdcdc] flex justify-between text-[#999]">
            <span class="pl-[2px] pt-[4px]">2000</span>
            <span class="w-[18px] border-l border-[#d8d8d8] flex flex-col">
              <svg class="w-[16px] h-[10px]" viewBox="0 0 16 10"><path d="M5 6.500h6L8 3.500z" fill="#666"/></svg>
              <svg class="w-[16px] h-[10px] border-t border-[#d8d8d8]" viewBox="0 0 16 10"><path d="M5 3.500h6L8 6.500z" fill="#666"/></svg>
            </span>
          </div>
        </div>
        <div class="h-[28px] flex items-center pt-[8px]"><span class="w-[108px]">Process Values</span><svg class="w-[14px] h-[14px]"><use href="#plug"/></svg></div>
        <div class="w-[1273px] h-[407px] bg-white border-2 border-[#c4c4c4] flex overflow-hidden">
          <div class="w-[1254px] pl-[3px]">
            <div class="grid grid-cols-[311px_313px_250px_188px_1fr] h-[19px] items-center pt-[2px]"><span class="pl-[3px]">Name</span><span class="pl-[5px]">Value</span><span class="pl-[5px]">Unit</span><span class="pl-[5px]">RangeInfo</span><span class="pl-[5px]">Error</span></div>
            <div class="grid grid-cols-[311px_313px_250px_188px_1fr] h-[20px] items-center pt-[3px] border-b border-[#f2f2f2] text-[#4a4eaa]"><span class="pl-[3px]">Response State</span><span class="pl-[5px]">acknowledged</span><span></span><span></span><span></span></div>
            <div class="grid grid-cols-[311px_313px_250px_188px_1fr] h-[20px] items-center pt-[3px] border-b border-[#f2f2f2] text-[#4a4eaa]"><span class="pl-[3px]">RESPONSE_PDU</span><span class="pl-[5px]">0x71,01,02,45,01</span><span></span><span></span><span></span></div>
            <div class="grid grid-cols-[311px_313px_250px_188px_1fr] h-[20px] items-center pt-[3px] border-b border-[#f2f2f2] text-[#4a4eaa]"><span class="pl-[8px]">SID-PR</span><span class="pl-[5px]">0x71</span><span></span><span class="pl-[5px]">Value OK</span><span></span></div>
            <div class="grid grid-cols-[311px_313px_250px_188px_1fr] h-[20px] items-center pt-[3px] border-b border-[#f2f2f2] text-[#4a4eaa]"><span class="pl-[8px]">RoutineControlType</span><span class="pl-[5px]">0x01</span><span></span><span class="pl-[5px]">Value OK</span><span></span></div>
            <div class="grid grid-cols-[311px_313px_250px_188px_1fr] h-[20px] items-center pt-[3px] border-b border-[#f2f2f2] text-[#4a4eaa]"><span class="pl-[8px]">RoutineIdentifier</span><span class="pl-[5px]">0x02,45</span><span></span><span class="pl-[5px]">Value OK</span><span></span></div>
            <div class="grid grid-cols-[311px_313px_250px_188px_1fr] h-[20px] items-center pt-[3px] border-b border-[#f2f2f2] text-[#4a4eaa]"><span class="pl-[8px]">routineInfo</span><span class="pl-[5px]">Routine in progress</span><span></span><span class="pl-[5px]">Value OK</span><span></span></div>
            <div class="grid grid-cols-[311px_313px_250px_188px_1fr] h-[20px] items-center pt-[3px] border-b border-[#f2f2f2] bg-[#e2e2e2]"><span class="pl-[3px]">[Tester]</span><span class="pl-[5px]">[638]</span><span></span><span></span><span></span></div>
            <div class="grid grid-cols-[311px_313px_250px_188px_1fr] h-[20px] items-center pt-[3px] border-b border-[#f2f2f2] bg-[#e2e2e2]"><span class="pl-[3px]">Synchronize to Non-volatile Memory Results</span><span class="pl-[5px]">eALL_POSITIVE</span><span></span><span></span><span></span></div>
            <div class="grid grid-cols-[311px_313px_250px_188px_1fr] h-[20px] items-center pt-[3px] border-b border-[#f2f2f2] bg-[#e2e2e2]"><span class="pl-[8px]">SID-RQ</span><span class="pl-[5px]">0x31</span><span></span><span class="pl-[5px]">Value OK</span><span></span></div>
            <div class="grid grid-cols-[311px_313px_250px_188px_1fr] h-[20px] items-center pt-[3px] border-b border-[#f2f2f2] bg-[#e2e2e2]"><span class="pl-[8px]">RoutineControlType</span><span class="pl-[5px]">0x03</span><span></span><span class="pl-[5px]">Value OK</span><span></span></div>
            <div class="grid grid-cols-[311px_313px_250px_188px_1fr] h-[20px] items-center pt-[3px] border-b border-[#f2f2f2] bg-[#e2e2e2]"><span class="pl-[8px]">RoutineIdentifier</span><span class="pl-[5px]">0x0245</span><span></span><span class="pl-[5px]">Value OK</span><span></span></div>
            <div class="grid grid-cols-[311px_313px_250px_188px_1fr] h-[20px] items-center pt-[3px] border-b border-[#f2f2f2] bg-[#e2e2e2]"><span class="pl-[3px]">REQUEST_PDU</span><span class="pl-[5px]">0x31,03,02,45</span><span></span><span></span><span></span></div>
            <div class="grid grid-cols-[311px_313px_250px_188px_1fr] h-[20px] items-center pt-[3px] border-b border-[#f2f2f2] bg-[#e2e2e2] text-[#4a4eaa]"><span class="pl-[3px]">HU6 (UDS_CAN_D).HU6_Mid_FreshUp3_7</span><span class="pl-[5px]">[5b8]</span><span></span><span></span><span></span></div>
            <div class="grid grid-cols-[311px_313px_250px_188px_1fr] h-[20px] items-center pt-[3px] border-b border-[#f2f2f2] bg-[#e2e2e2] text-[#4a4eaa]"><span class="pl-[3px]">Response State</span><span class="pl-[5px]">acknowledged</span><span></span><span></span><span></span></div>
            <div class="grid grid-cols-[311px_313px_250px_188px_1fr] h-[20px] items-center pt-[3px] border-b border-[#f2f2f2] bg-[#e2e2e2] text-[#4a4eaa]"><span class="pl-[3px]">RESPONSE_PDU</span><span class="pl-[5px]">0x71,03,02,45,00</span><span></span><span></span><span></span></div>
            <div class="grid grid-cols-[311px_313px_250px_188px_1fr] h-[20px] items-center pt-[3px] border-b border-[#f2f2f2] bg-[#e2e2e2] text-[#4a4eaa]"><span class="pl-[8px]">SID-PR</span><span class="pl-[5px]">0x71</span><span></span><span class="pl-[5px]">Value OK</span><span></span></div>
            <div class="grid grid-cols-[311px_313px_250px_188px_1fr] h-[20px] items-center pt-[3px] border-b border-[#f2f2f2] bg-[#e2e2e2] text-[#4a4eaa]"><span class="pl-[8px]">RoutineControlType</span><span class="pl-[5px]">0x03</span><span></span><span class="pl-[5px]">Value OK</span><span></span></div>
            <div class="grid grid-cols-[311px_313px_250px_188px_1fr] h-[20px] items-center pt-[3px] border-b border-[#f2f2f2] bg-[#e2e2e2] text-[#4a4eaa]"><span class="pl-[8px]">RoutineIdentifier</span><span class="pl-[5px]">0x02,45</span><span></span><span class="pl-[5px]">Value OK</span><span></span></div>
            <div class="grid grid-cols-[311px_313px_250px_188px_1fr] h-[20px] items-center pt-[3px] bg-[#e2e2e2] text-[#4a4eaa]"><span class="pl-[8px]">routineInfo</span><span class="pl-[5px]">Routine succesfully completed</span><span></span><span class="pl-[5px]">Value OK</span><span></span></div>
          </div>
          <div class="w-[17px] bg-[#f0f0f0] flex flex-col items-center">
            <svg class="w-[10px] h-[10px] mt-[5px]"><use href="#up"/></svg>
            <span class="w-[16px] h-[101px] bg-[#cdcdcd] mt-[271px]"></span>
            <svg class="w-[10px] h-[10px] mt-[4px]"><use href="#down"/></svg>
          </div>
        </div>
      </section>
    </div>
  </main>
</div>
</body>
</html>
